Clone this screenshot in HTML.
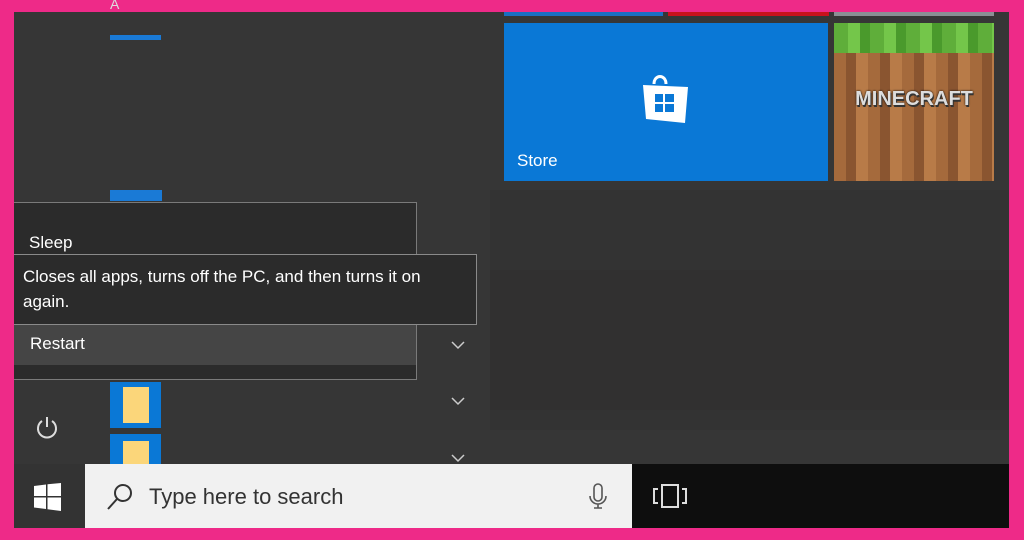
<!DOCTYPE html>
<html><head><style>
body{margin:0;width:1024px;height:540px;background:#ee2a88;position:relative;overflow:hidden;font-family:"Liberation Sans",sans-serif}
.a{position:absolute}
</style></head><body>
<div class="a" style="left:14px;top:12px;width:995px;height:516px;background:#363636"></div>
<div class="a" style="left:490px;top:190px;width:519px;height:240px;background:#333333"></div>
<div class="a" style="left:490px;top:270px;width:519px;height:140px;background:#313030"></div>
<div class="a" style="left:110px;top:-4px;color:#ddd;font-size:14px;">A</div>
<div class="a" style="left:110px;top:35px;width:51px;height:5px;background:#1a7ad6"></div>
<div class="a" style="left:110px;top:190px;width:52px;height:11px;background:#1a7ad6"></div>
<!-- tiles -->
<div class="a" style="left:504px;top:12px;width:159px;height:4px;background:#1a6fc2"></div>
<div class="a" style="left:668px;top:12px;width:161px;height:4px;background:#c8121c"></div>
<div class="a" style="left:834px;top:12px;width:160px;height:4px;background:#8a8f94"></div>
<div class="a" style="left:504px;top:23px;width:324px;height:158px;background:#0a78d6"></div>
<svg class="a" style="left:640px;top:72px" width="52" height="54" viewBox="0 0 52 54"><path d="M14 12 C14 2 26 2 26 12" fill="none" stroke="#fff" stroke-width="3"/><path d="M3 13 L48 15 L45 51 L6 47 Z" fill="#fff"/><rect x="15" y="22" width="8" height="8" fill="#0a78d6"/><rect x="25" y="22" width="9" height="8" fill="#0a78d6"/><rect x="15" y="32" width="8" height="8" fill="#0a78d6"/><rect x="25" y="32" width="9" height="8" fill="#0a78d6"/></svg>
<div class="a" style="left:517px;top:151px;color:#fff;font-size:17px">Store</div>
<div class="a" style="left:834px;top:23px;width:160px;height:158px;background:repeating-linear-gradient(90deg,#a56a3c 0 12px,#8a5530 12px 22px,#b87b48 22px 34px);"></div>
<div class="a" style="left:834px;top:23px;width:160px;height:30px;background:repeating-linear-gradient(90deg,#5fae3a 0 14px,#74c64a 14px 26px,#4a9a2c 26px 36px)"></div>
<div class="a" style="left:834px;top:88px;width:160px;text-align:center;color:#ddd;font-weight:bold;font-size:20px;text-shadow:1px 2px 0 #333,0 0 2px #000">MINECRAFT</div>
<!-- power menu -->
<div class="a" style="left:14px;top:202px;width:403px;height:178px;background:#2b2b2b;border:1px solid #7a7a7a;border-left:none;box-sizing:border-box"></div>
<div class="a" style="left:29px;top:233px;color:#fff;font-size:17px">Sleep</div>
<div class="a" style="left:14px;top:325px;width:402px;height:40px;background:#454545"></div>
<div class="a" style="left:30px;top:334px;color:#fff;font-size:17px">Restart</div>
<div class="a" style="left:14px;top:254px;width:463px;height:71px;background:#2b2b2b;border:1px solid #8a8a8a;border-left:none;box-sizing:border-box"></div>
<div class="a" style="left:23px;top:264px;color:#fff;font-size:17px;line-height:25px;width:445px">Closes all apps, turns off the PC, and then turns it on again.</div>
<!-- chevrons -->
<svg class="a" style="left:451px;top:341px" width="14" height="9"><path d="M1 1 L7 7 L13 1" fill="none" stroke="#ccc" stroke-width="1.5"/></svg>
<svg class="a" style="left:451px;top:397px" width="14" height="9"><path d="M1 1 L7 7 L13 1" fill="none" stroke="#ccc" stroke-width="1.5"/></svg>
<svg class="a" style="left:451px;top:454px" width="14" height="9"><path d="M1 1 L7 7 L13 1" fill="none" stroke="#ccc" stroke-width="1.5"/></svg>
<svg class="a" style="left:34px;top:415px" width="26" height="26" viewBox="0 0 26 26"><path d="M8 6 A9 9 0 1 0 18 6" fill="none" stroke="#ddd" stroke-width="2"/><line x1="13" y1="2" x2="13" y2="12" stroke="#ddd" stroke-width="2"/></svg>
<div class="a" style="left:110px;top:382px;width:51px;height:46px;background:#0a78d6"><div class="a" style="left:13px;top:5px;width:26px;height:36px;background:#fbd67a"></div></div>
<div class="a" style="left:110px;top:434px;width:51px;height:30px;background:#0a78d6"><div class="a" style="left:13px;top:7px;width:26px;height:23px;background:#fbd67a"></div></div>
<!-- taskbar -->
<div class="a" style="left:14px;top:464px;width:71px;height:64px;background:#333"></div>
<svg class="a" style="left:34px;top:483px" width="28" height="28" viewBox="0 0 28 28"><path d="M0 3 L12 1.5 V13 H0 Z M13.5 1.3 L27 0 V13 H13.5 Z M0 14.5 H12 V26 L0 24.5 Z M13.5 14.5 H27 V28 L13.5 26.2 Z" fill="#fff"/></svg>
<div class="a" style="left:85px;top:464px;width:547px;height:64px;background:#f1f1f1"></div>
<svg class="a" style="left:104px;top:482px" width="30" height="30" viewBox="0 0 30 30"><circle cx="19" cy="11" r="8" fill="none" stroke="#333" stroke-width="2"/><line x1="13" y1="17" x2="4" y2="27" stroke="#333" stroke-width="2"/></svg>
<div class="a" style="left:149px;top:484px;color:#333;font-size:22px">Type here to search</div>
<svg class="a" style="left:585px;top:482px" width="28" height="30" viewBox="0 0 28 30"><rect x="9" y="2" width="8" height="17" rx="4" fill="none" stroke="#555" stroke-width="1.6"/><path d="M5 14 A8 8 0 0 0 21 14 M13 22 V26 M9 26 H17" fill="none" stroke="#555" stroke-width="1.6"/></svg>
<div class="a" style="left:632px;top:464px;width:377px;height:64px;background:#0e0e0e"></div>
<svg class="a" style="left:652px;top:484px" width="36" height="26" viewBox="0 0 36 26"><rect x="10" y="1" width="16" height="22" fill="none" stroke="#ddd" stroke-width="2"/><path d="M6 5 H2 V19 H6 M30 5 H34 V19 H30" fill="none" stroke="#ddd" stroke-width="2"/></svg>
</body></html>
